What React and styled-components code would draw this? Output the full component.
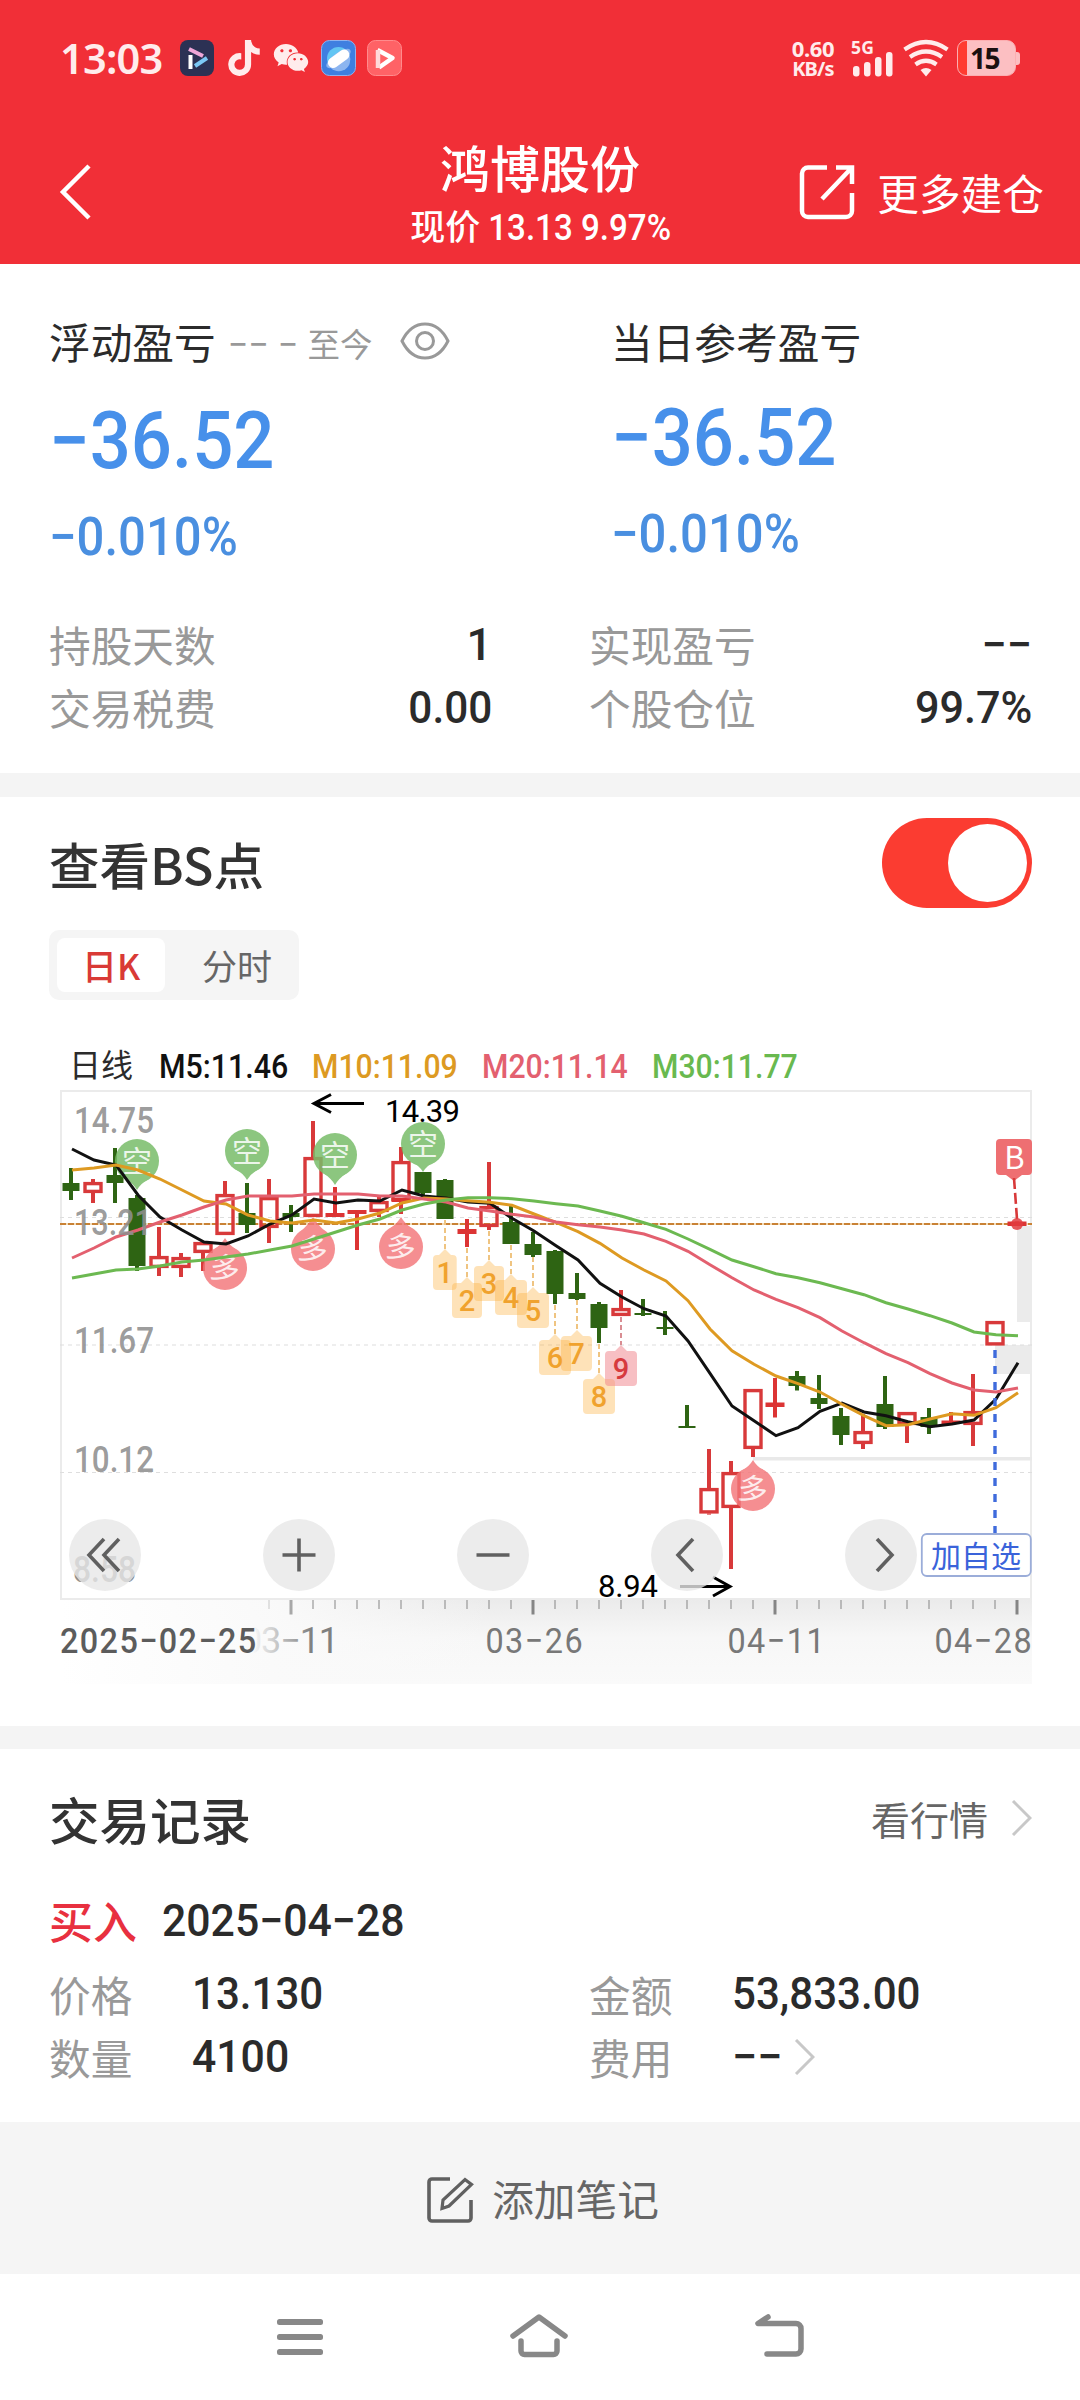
import React from "react";
import styled, { createGlobalStyle } from "styled-components";
import { FaTiktok, FaWeixin } from "react-icons/fa6";

const CJK = `"Noto Sans CJK SC", "Noto Sans", sans-serif`;
const DIN = `Roboto, "Noto Sans CJK SC", sans-serif`;

const GlobalStyle = createGlobalStyle`
  *, *::before, *::after { box-sizing: border-box; }
  body { margin: 0; background: #fff; font-family: ${CJK}; color: #2b2b2b; }
  svg { display: block; flex-shrink: 0; }
`;

const Page = styled.div`
  width: 1080px;
  height: 2400px;
  display: flex;
  flex-direction: column;
  background: #fff;
  overflow: hidden;
`;

const Num = styled.span`
  display: inline-block;
  font-family: ${DIN};
  font-weight: ${(p) => p.$weight || 500};
  font-size: ${(p) => p.$size || 45}px;
  color: ${(p) => p.$color || "inherit"};
  white-space: pre;
  transform: scaleX(${(p) => p.$sx || 1});
  transform-origin: ${(p) => p.$origin || "left"} center;
`;

/* ---------- header ---------- */
const Top = styled.header`
  height: 264px;
  background: #f12f37;
  color: #fff;
`;
const StatusBar = styled.div`
  height: 116px;
  padding: 0 60px;
  display: flex;
  align-items: center;
  justify-content: space-between;
`;
const StatusGroup = styled.div`
  display: flex;
  align-items: center;
  color: #ffecec;
`;
const Clock = styled.span`
  font: 600 41.5px/58px "Noto Sans", sans-serif;
  width: 120px;
  letter-spacing: -0.8px;
`;
const AppIcons = styled.div`
  display: flex;
  align-items: center;
  gap: 11.500px;
`;
const Speed = styled.div`
  font: 700 22px/22px "Noto Sans", sans-serif;
  text-align: center;
  width: 48px;
  letter-spacing: -0.3px;
`;
const SpeedUnit = styled.div`
  font-size: 20px;
  line-height: 20px;
  letter-spacing: -0.8px;
`;
const Signal = styled.div`
  display: flex;
  margin-left: 13px;
`;
const Battery = styled.div`
  width: 59px;
  height: 36px;
  margin-left: 9px;
  border-radius: 9px;
  background: linear-gradient(90deg, #ff3b30 9px, #fcbfc2 9px);
  border: 1px solid #fcaeb1;
  color: #1a1010;
  display: flex;
  align-items: center;
  justify-content: center;
  padding-right: 4px;
  font: 700 28px/34px "Noto Sans", sans-serif;
  letter-spacing: -1.5px;
`;
const BatteryCap = styled.i`
  width: 4px;
  height: 13px;
  border-radius: 0 3px 3px 0;
  background: #fcbfc2;
`;
const NavBar = styled.div`
  height: 148px;
  display: grid;
  grid-template-columns: 380px 320px 380px;
`;
const BackCell = styled.div`
  display: flex;
  align-items: center;
  padding: 4px 0 0 58px;
`;
const TitleCell = styled.div`
  padding-top: 20px;
  text-align: center;
  white-space: nowrap;
`;
const Title = styled.div`
  font-weight: 500;
  font-size: 50px;
  line-height: 60px;
`;
const SubTitle = styled.div`
  margin-top: 4px;
  display: flex;
  justify-content: center;
  align-items: baseline;
  padding-left: 18px;
  font-weight: 500;
  font-size: 35px;
  line-height: 50px;
`;
const ActionCell = styled.div`
  display: flex;
  align-items: center;
  justify-content: flex-end;
  gap: 22px;
  padding: 3px 36px 0 0;
  font-size: 41.7px;
`;

/* ---------- sections ---------- */
const Divider = styled.div`
  height: ${(p) => p.$h}px;
  background: #f4f4f4;
`;
const Summary = styled.section`
  height: 509px;
  padding: 46.500px 48px 0 49px;
`;
const ProfitRow = styled.div`
  display: grid;
  grid-template-columns: 562px 1fr;
  height: 256px;
`;
const ProfitLabel = styled.div`
  display: flex;
  align-items: center;
  height: 60px;
  font-size: 41.7px;
  line-height: 60px;
`;
const Since = styled.span`
  margin: 7px 0 0 12px;
  color: #999;
  font-size: 32.500px;
`;
const EyeWrap = styled.span`
  margin-left: 28px;
`;
const BigValue = styled.div`
  margin-top: ${(p) => p.$gap}px;
  height: 80px;
  line-height: 80px;
  color: #4790ea;
`;
const Percent = styled.div`
  margin-top: 26px;
  height: 60px;
  line-height: 60px;
  color: #4a8fe0;
`;
const Stats = styled.div`
  margin-top: 46px;
  display: grid;
  grid-template-columns: 443px 443px;
  justify-content: space-between;
`;
const Stat = styled.div`
  height: 63px;
  display: flex;
  align-items: center;
  justify-content: space-between;
`;
const Label = styled.span`
  color: #999;
  font-size: 41.7px;
  line-height: 60px;
  width: ${(p) => (p.$w ? p.$w + "px" : "auto")};
`;

const ChartSection = styled.section`
  height: 929px;
`;
const SectionHead = styled.div`
  height: ${(p) => p.$h}px;
  padding: 0 48px 2px 49px;
  display: flex;
  align-items: center;
  justify-content: space-between;
`;
const Heading = styled.h2`
  margin: 0;
  font-weight: 500;
  font-size: 50.500px;
  line-height: 70px;
  color: #333;
`;
const Toggle = styled.div`
  width: 150px;
  height: 90px;
  border-radius: 45px;
  background: #fb3c31;
  padding: 6px 5px;
  display: flex;
  justify-content: flex-end;
`;
const Knob = styled.div`
  width: 79px;
  height: 78px;
  border-radius: 50%;
  background: #fff;
`;
const Tabs = styled.div`
  width: 250px;
  height: 70px;
  margin-left: 49px;
  padding: 8px;
  border-radius: 10px;
  background: #f5f5f5;
  display: flex;
`;
const Tab = styled.div`
  flex: none;
  width: ${(p) => p.$w}px;
  height: 54px;
  padding-left: ${(p) => p.$pad || 0}px;
  border-radius: 8px;
  line-height: 54px;
  text-align: center;
  font-size: 35px;
  font-weight: ${(p) => (p.$on ? 500 : 400)};
  color: ${(p) => (p.$on ? "#d93a36" : "#666")};
  background: ${(p) => (p.$on ? "#fff" : "transparent")};
`;
const Averages = styled.div`
  height: 50px;
  margin-top: 40px;
  padding: 0 0 4px 69px;
  display: flex;
  align-items: center;
  font-size: 32px;
  line-height: 46px;
  white-space: nowrap;
`;
const Average = styled.div`
  width: ${(p) => p.$w}px;
  padding-top: ${(p) => p.$pt}px;
`;
const ChartWrap = styled.div`
  position: relative;
  height: 600px;
`;
const Controls = styled.div`
  position: absolute;
  left: 69px;
  top: 429px;
  display: flex;
  gap: 122px;
`;
const RoundButton = styled.button`
  width: 72px;
  height: 72px;
  padding: 0;
  border: 0;
  border-radius: 50%;
  background: rgba(231, 231, 231, 0.8);
  display: flex;
  align-items: center;
  justify-content: center;
`;

/* ---------- records ---------- */
const Records = styled.section`
  height: 373px;
`;
const More = styled.div`
  display: flex;
  align-items: center;
  gap: 23px;
  font-size: 39px;
  color: #666;
`;
const TradeHead = styled.div`
  height: 62px;
  padding-left: 49px;
  display: flex;
  align-items: center;
`;
const Side = styled.span`
  width: 113px;
  font-weight: 500;
  font-size: 44px;
  line-height: 62px;
  color: #e8303f;
`;
const TradeGrid = styled.div`
  margin: 11px 0 0 49px;
  display: grid;
  grid-template-columns: 540px 1fr;
`;
const Field = styled.div`
  height: 63px;
  display: flex;
  align-items: center;
`;
const AddNote = styled.div`
  height: 152px;
  background: #f5f5f5;
  display: flex;
  align-items: center;
  justify-content: center;
  gap: 18px;
  padding-left: 5px;
  font-size: 41.7px;
  color: #666;
`;
const NoteIcon = styled.span`
  padding-top: 4px;
`;
const SystemNav = styled.nav`
  height: 126px;
  padding: 0 276px 3px;
  display: flex;
  align-items: center;
  justify-content: space-between;
`;

/* ---------- chart data ---------- */
const X0 = 71;
const STEP = 22;
const R = "#d8393a";
const G = "#2e6413";
// [kind, high, low, bodyTop, bodyBottom]; r = hollow red, s = solid red, g = green
const candles = [
  ["g", 1168, 1200, 1183, 1191],
  ["r", 1179, 1203, 1182, 1193],
  ["g", 1148, 1203, 1175, 1183],
  ["g", 1195, 1271, 1198, 1266],
  ["r", 1227, 1276, 1256, 1268],
  ["r", 1253, 1277, 1257, 1268],
  ["r", 1242, 1271, 1242, 1253],
  ["r", 1181, 1235, 1194, 1235],
  ["g", 1183, 1233, 1213, 1225],
  ["r", 1179, 1243, 1197, 1228],
  ["g", 1205, 1232, 1213, 1217],
  ["r", 1121, 1217, 1157, 1217],
  ["s", 1187, 1217, 1213, 1217],
  ["s", 1210, 1250, 1210, 1214],
  ["r", 1197, 1217, 1201, 1212],
  ["r", 1147, 1214, 1161, 1201],
  ["g", 1172, 1195, 1172, 1193],
  ["g", 1179, 1219, 1180, 1219],
  ["s", 1219, 1247, 1229, 1234],
  ["r", 1162, 1230, 1206, 1227],
  ["g", 1206, 1244, 1222, 1244],
  ["g", 1232, 1257, 1244, 1255],
  ["g", 1250, 1304, 1251, 1294],
  ["g", 1273, 1300, 1293, 1299],
  ["g", 1302, 1343, 1304, 1328],
  ["r", 1290, 1316, 1308, 1316],
  ["g", 1299, 1316, 1313, 1315],
  ["g", 1311, 1335, 1327, 1329],
  ["g", 1405, 1428, 1426, 1428],
  ["r", 1449, 1514.6, 1488, 1513.5],
  ["r", 1461, 1569, 1472, 1508],
  ["r", 1389, 1457, 1389, 1449],
  ["s", 1378, 1417.5, 1402.5, 1407],
  ["g", 1371, 1390.5, 1376, 1386],
  ["g", 1375, 1409, 1398, 1404],
  ["g", 1408, 1445, 1416, 1435],
  ["r", 1414, 1449, 1431, 1444],
  ["g", 1376, 1429, 1404, 1427],
  ["r", 1412, 1443, 1412, 1425],
  ["g", 1408, 1434, 1417, 1427],
  ["s", 1412, 1424, 1420.5, 1424],
  ["r", 1374, 1446, 1411, 1425],
  ["r", 1321, 1345.5, 1321, 1345.5],
  ["s", 1221.5, 1226, 1221.5, 1226],
];
const averages = [
  ["#111", [207,240,255,345,411,450,486,492,468,432,405,357,369,360,363,330,348,354,366,370,415,453,497,540,610,651,686,708,783,880,978,1022,1067,1043,994,969,996,1007,1025,1040,1032,1020,957,848]],
  ["#de9a22", [270,264,255,270,297,330,363,372,405,423,429,420,429,417,399,369,354,357,362,367,376,402,427,455,490,534,570,603,662,747,812,853,888,911,936,973,1007,1037,1034,1017,1001,1006,983,938]],
  ["#e3606f", [534,504,471,450,426,405,381,360,348,348,348,342,342,342,348,348,357,366,384,393,403,411,426,434,441,450,462,484,514,554,593,630,658,683,713,753,788,821,848,881,909,930,936,924]],
  ["#6cb951", [594,582,570,567,558,546,540,531,522,510,498,477,456,435,417,390,372,360,353,353,356,363,371,378,393,409,428,448,477,508,540,560,581,593,608,626,644,668,687,707,729,756,764,767]],
];
// [centre x, centre y, tip y]
const shortPins = [[137, 1161, 1190], [247, 1151, 1180], [335, 1155, 1185], [423, 1144, 1172]];
const longPins = [[225, 1268, 1238], [313, 1249, 1217], [401, 1247, 1217], [753, 1489, 1460]];
// [digit, left, right, rect top, stem start, stem x]
const tags = [
  [1, 433, 456.7, 1255, 1220, 445],
  [2, 452, 482, 1283, 1248, 467],
  [3, 474, 504, 1266, 1231, 489],
  [4, 495, 527, 1280, 1245, 511],
  [5, 517, 549, 1293, 1257, 533],
  [6, 539, 571, 1340, 1305, 555],
  [7, 561, 592, 1336, 1300, 577],
  [8, 583, 615, 1379, 1344, 599],
  [9, 605, 637, 1351, 1317, 621],
];
const prices = [["14.75", 1133, 80], ["13.21", 1235, 78], ["11.67", 1353, 80], ["10.12", 1472, 80]];

const Candle = ({ data: [kind, hi, lo, top, bottom], i }) => {
  const x = X0 + STEP * i;
  if (kind === "g")
    return (
      <g fill={G}>
        <rect x={x - 2} y={hi} width="4" height={lo - hi} />
        <rect x={x - 8.5} y={top} width="17" height={bottom - top} />
      </g>
    );
  if (kind === "s")
    return (
      <g fill="#dc3434">
        <rect x={x - 2} y={hi} width="4" height={lo - hi} />
        <rect x={x - 9.5} y={top} width="19" height={bottom - top} />
      </g>
    );
  return (
    <g fill={R}>
      <rect x={x - 2} y={hi} width="4" height={Math.max(0, top - hi)} />
      <rect x={x - 2} y={bottom} width="4" height={Math.max(0, lo - bottom)} />
      <rect x={x - 8} y={top + 1.6} width="16" height={bottom - top - 3.2} fill="none" stroke={R} strokeWidth="3.4" />
    </g>
  );
};

const ticks = Array.from({ length: 35 }, (_, k) => 269 + STEP * k);

const KLine = () => (
  <svg width="1080" height="600" viewBox="0 1090 1080 600" fontFamily={DIN}>
    <defs>
      <linearGradient id="rulerDown" x1="0" y1="0" x2="0" y2="1">
        <stop offset="0" stopColor="#ebebeb" />
        <stop offset="0.45" stopColor="#f7f7f7" />
        <stop offset="1" stopColor="#fafafa" />
      </linearGradient>
      <linearGradient id="rulerFade" x1="0" y1="0" x2="1" y2="0">
        <stop offset="0" stopColor="#fff" />
        <stop offset="0.5" stopColor="#fafafa" stopOpacity="0.95" />
        <stop offset="1" stopColor="#fafafa" stopOpacity="0" />
      </linearGradient>
      <linearGradient id="dateFade" gradientUnits="userSpaceOnUse" x1="252" y1="0" x2="312" y2="0">
        <stop offset="0" stopColor="#808080" stopOpacity="0" />
        <stop offset="1" stopColor="#808080" />
      </linearGradient>
    </defs>

    <rect x="60" y="1600" width="972" height="84" fill="url(#rulerDown)" />
    <rect x="60" y="1600" width="430" height="84" fill="url(#rulerFade)" />

    <rect x="61" y="1091" width="970" height="508" fill="none" stroke="#ebebeb" strokeWidth="2" />
    <rect x="1017" y="1226" width="15" height="96" fill="#ebebeb" />
    <rect x="995" y="1345" width="37" height="29" fill="#ebebeb" />
    <rect x="753" y="1457" width="279" height="3.5" fill="#e9e9e9" />
    {[1217.5, 1345, 1472.5].map((y) => (
      <line key={y} x1="60" x2="1032" y1={y} y2={y} stroke="#dedede" strokeWidth="1.2" strokeDasharray="4 4" />
    ))}
    <line x1="60" x2="1032" y1="1224" y2="1224" stroke="#f3dcb8" strokeWidth="2" />
    <line x1="60" x2="1032" y1="1224" y2="1224" stroke="#c98235" strokeWidth="2" strokeDasharray="6 2" />

    {candles.map((c, i) => (
      <Candle key={i} data={c} i={i} />
    ))}
    <rect x="391.500" y="1198" width="19" height="4" fill="#dc3434" />

    {shortPins.map(([x, y, tip]) => (
      <g key={x} opacity="0.85">
        <circle cx={x} cy={y} r="22" fill="#78bd69" />
        <path d={`M${x - 12} ${y + 18}Q${x - 4} ${tip - 7} ${x} ${tip}Q${x + 4} ${tip - 7} ${x + 12} ${y + 18}Z`} fill="#78bd69" />
        <text x={x} y={y + 10.5} fontSize="30" fill="#fff" fillOpacity="0.85" textAnchor="middle" fontFamily={CJK}>空</text>
      </g>
    ))}
    {longPins.map(([x, y, tip]) => (
      <g key={x} opacity="0.82">
        <circle cx={x} cy={y} r="22" fill="#f37679" />
        <path d={`M${x - 12} ${y - 18}Q${x - 4} ${tip + 7} ${x} ${tip}Q${x + 4} ${tip + 7} ${x + 12} ${y - 18}Z`} fill="#f37679" />
        <text x={x} y={y + 11} fontSize="30" fill="#fff" fillOpacity="0.85" textAnchor="middle" fontFamily={CJK} transform={`rotate(8 ${x} ${y})`}>多</text>
      </g>
    ))}

    {averages.map(([color, pts]) => (
      <polyline
        key={color}
        fill="none"
        stroke={color}
        strokeWidth="3"
        points={pts.map((v, i) => `${72 + STEP * i},${(1080 + v / 3).toFixed(1)}`).join(" ")}
      />
    ))}

    {tags.map(([n, l, r, top, from, sx]) => {
      const red = n === 9;
      return (
        <g key={n}>
          <line x1={sx} x2={sx} y1={from} y2={top - 6} stroke={red ? "#d98d92" : "#efc481"} strokeWidth="2" strokeDasharray="5 3" />
          <path
            d={`M${l + 4} ${top}H${sx - 6}L${sx} ${top - 6}L${sx + 6} ${top}H${r - 4}a4 4 0 0 1 4 4V${top + 31}a4 4 0 0 1 -4 4H${l + 4}a4 4 0 0 1 -4 -4V${top + 4}a4 4 0 0 1 4 -4Z`}
            fill={red ? "#ef8088" : "#fbb03b"}
            fillOpacity={red ? 0.5 : 0.36}
          />
          <text x={(l + r) / 2} y={top + 28} fontSize="29" fontWeight="500" textAnchor="middle" fill={red ? "#d63a3e" : "#f0a22e"}>
            {n}
          </text>
        </g>
      );
    })}

    <path d="M364 1103.5H314M331 1094.5L314 1103.5L331 1112.5" fill="none" stroke="#000" strokeWidth="3" />
    <text x="385" y="1122" fontSize="31" fill="#000" textLength="75">14.39</text>
    <path d="M680 1586.5H730M713 1577L730 1586.5L713 1596" fill="none" stroke="#000" strokeWidth="3" />
    <text x="598" y="1597" fontSize="31" fill="#000" textLength="60">8.94</text>

    <g opacity="0.95">
      <path d="M1000 1139h28a4 4 0 0 1 4 4v28a4 4 0 0 1 -4 4h-6l-8 6l-8 -6h-6a4 4 0 0 1 -4 -4v-28a4 4 0 0 1 4 -4Z" fill="#ee686b" />
      <text x="1014.5" y="1168.5" fontSize="31" fill="#fff" textAnchor="middle" fontFamily={CJK}>B</text>
    </g>
    <line x1="1014" y1="1178" x2="1017" y2="1219" stroke="#d8393a" strokeWidth="2.6" strokeDasharray="11 4" />
    <circle cx="1017" cy="1224" r="6" fill="#e23c40" opacity="0.85" />

    <line x1="995" x2="995" y1="1350" y2="1534" stroke="#3f6bdc" strokeWidth="3.4" strokeDasharray="8 8" />
    <rect x="921.8" y="1534" width="109" height="42" rx="5" fill="#fff" stroke="#9badd9" strokeWidth="1.8" />
    <text x="976" y="1567" fontSize="30" fill="#3a63da" textAnchor="middle" fontFamily={CJK}>加自选</text>

    {prices.map(([t, y, w]) => (
      <text key={t} x="74" y={y} fontSize="36" fontWeight="500" fill="#8f8f8f" fillOpacity="0.9" textLength={w} lengthAdjust="spacingAndGlyphs">
        {t}
      </text>
    ))}
    <text x="73" y="1582" fontSize="36" fontWeight="500" fill="#8f8f8f" textLength="63" lengthAdjust="spacingAndGlyphs">8.58</text>

    {ticks.map((x) => {
      const major = (x - 291) % 242 === 0;
      return (
        <rect
          key={x}
          x={x - (major ? 1.5 : 0.5)}
          y="1600"
          width={major ? 3 : 1}
          height={major ? 14.5 : 9}
          fill={x < 280 ? "#c8c8c8" : x < 300 ? "#a8a8a8" : "#858585"}
        />
      );
    })}
    <g fontSize="36" fill="#787878">
      <g transform="translate(60 1653) scale(0.9 1)">
        <text fill="#5c5c5c" fontWeight="500" textLength="218">2025−02−25</text>
      </g>
      <g transform="translate(534 1653) scale(0.9 1)">
        <text x="-54" textLength="108">03−26</text>
      </g>
      <g transform="translate(776 1653) scale(0.9 1)">
        <text x="-54" textLength="108">04−11</text>
      </g>
      <g transform="translate(983 1653) scale(0.9 1)">
        <text x="-54" textLength="108">04−28</text>
      </g>
      <text x="242" y="1653" fill="url(#dateFade)" textLength="97">03−11</text>
    </g>
  </svg>
);

const controlPaths = [
  "M35 20L20 36L35 52M50 20L35 36L50 52",
  "M19.5 36H52.5M36 19.5V52.5",
  "M19.5 36H52.5",
  "M42 20L27 36L42 52",
  "M32 20L47 36L32 52",
];

const Chevron = () => (
  <svg width="21" height="36" viewBox="0 0 21 36" fill="none" stroke="#c8c8c8" strokeWidth="3">
    <path d="M2 1L19 18L2 35" />
  </svg>
);

const Profit = ({ children, gap }) => (
  <div>
    <ProfitLabel>{children}</ProfitLabel>
    <BigValue $gap={gap}><Num $size={80} $sx={0.905}>−36.52</Num></BigValue>
    <Percent><Num $size={53} $sx={0.925}>−0.010%</Num></Percent>
  </div>
);

export default function App() {
  return (
    <Page>
      <GlobalStyle />
      <Top>
        <StatusBar>
          <StatusGroup>
            <Clock>13:03</Clock>
            <AppIcons>
              <svg width="34" height="36" viewBox="0 0 34 36">
                <rect width="34" height="36" rx="8" fill="#2c3154" />
                <path d="M10.5 15V29" stroke="#fff" strokeWidth="4" />
                <path d="M9 9L23 16" stroke="#efa6d8" strokeWidth="4" />
                <path d="M15 26L27 18" stroke="#7cc8f5" strokeWidth="4" />
              </svg>
              <FaTiktok size={36} />
              <FaWeixin size={36} />
              <svg width="35" height="36" viewBox="0 0 35 36">
                <rect x="0.5" y="0.5" width="34" height="35" rx="8" fill="#3f7fe0" stroke="#8fb2ee" />
                <circle cx="17.5" cy="18.5" r="11.5" fill="#63c6f3" />
                <path d="M7 24A11.5 11.5 0 0 0 28.500 15Z" fill="#8cb5f0" />
                <ellipse cx="17.500" cy="18.500" rx="14.500" ry="5.500" fill="#8cb5f0" transform="rotate(-36 17.5 18.5)" />
                <rect x="5.500" y="13.500" width="24" height="10.500" rx="5.200" fill="#fff" transform="rotate(-36 17.5 18.5)" />
              </svg>
              <svg width="35" height="36" viewBox="0 0 35 36">
                <rect x="0.5" y="0.5" width="34" height="35" rx="8" fill="#ff6266" stroke="#ff8b8d" />
                <path d="M10.5 10L25.500 18L12 27.500" fill="none" stroke="#fff" strokeWidth="4.500" strokeLinejoin="round" />
                <path d="M11 10V28" stroke="#ffd9da" strokeWidth="4.500" />
              </svg>
            </AppIcons>
          </StatusGroup>
          <StatusGroup>
            <Speed>
              0.60
              <SpeedUnit>KB/s</SpeedUnit>
            </Speed>
            <Signal>
              <svg width="98" height="40" viewBox="850 38 98 40" fill="#ffecec" overflow="visible">
                <text x="851" y="53.500" fontSize="17.500" fontWeight="700" fontFamily="Noto Sans" textLength="23">5G</text>
                <rect x="853" y="66" width="6.500" height="10.500" rx="3" />
                <rect x="864" y="62" width="6.500" height="14.500" rx="3" />
                <rect x="875" y="57" width="6.500" height="19.500" rx="3" />
                <rect x="886" y="52" width="6.500" height="24.500" rx="3" />
                <g fill="none" stroke="#ffecec" strokeWidth="4.200">
                  <path d="M904.500 49.500Q926 34.500 947.500 49.500" />
                  <path d="M910 57Q926 46 942 57" />
                  <path d="M915.500 64.500Q926 57 936.500 64.500" />
                </g>
                <path d="M920.500 70Q926 66 931.500 70L926 76.500Z" />
              </svg>
            </Signal>
            <Battery>15</Battery>
            <BatteryCap />
          </StatusGroup>
        </StatusBar>
        <NavBar>
          <BackCell>
            <svg width="34" height="56" viewBox="0 0 34 56" fill="none" stroke="#fff" strokeWidth="4.500">
              <path d="M31 2L5 28L31 54" />
            </svg>
          </BackCell>
          <TitleCell>
            <Title>鸿博股份</Title>
            <SubTitle>现价<Num $size={36} $sx={0.92}> 13.13 9.97%</Num></SubTitle>
          </TitleCell>
          <ActionCell>
            <svg width="56" height="56" viewBox="0 0 56 56" fill="none" stroke="#fff" strokeWidth="4.500">
              <path d="M28 3.500H9a6 6 0 0 0 -6 6V47a6 6 0 0 0 6 6H47a6 6 0 0 0 6 -6V29" />
              <path d="M37 3.500H53V20M53 3.500L23 35" />
            </svg>
            更多建仓
          </ActionCell>
        </NavBar>
      </Top>

      <Summary>
        <ProfitRow>
          <Profit gap={30}>
            浮动盈亏
            <Since><Num $size={36} $weight={400}>−− − </Num>至今</Since>
            <EyeWrap>
              <svg width="50" height="38" viewBox="0 0 50 38" fill="none" stroke="#999" strokeWidth="3">
                <path d="M2 19C8 7 16 2 25 2S42 7 48 19C42 31 34 36 25 36S8 31 2 19Z" />
                <circle cx="25" cy="19" r="8.500" />
              </svg>
            </EyeWrap>
          </Profit>
          <Profit gap={27}>当日参考盈亏</Profit>
        </ProfitRow>
        <Stats>
          <Stat><Label>持股天数</Label><Num>1</Num></Stat>
          <Stat><Label>实现盈亏</Label><Num>−−</Num></Stat>
          <Stat><Label>交易税费</Label><Num $sx={0.94} $origin="right">0.00</Num></Stat>
          <Stat><Label>个股仓位</Label><Num $sx={0.96} $origin="right">99.7%</Num></Stat>
        </Stats>
      </Summary>
      <Divider $h={24} />

      <ChartSection>
        <SectionHead $h={133}>
          <Heading>查看BS点</Heading>
          <Toggle><Knob /></Toggle>
        </SectionHead>
        <Tabs>
          <Tab $on $w={108}>日K</Tab>
          <Tab $w={126} $pad={18}>分时</Tab>
        </Tabs>
        <Averages>
          <Average $w={90} $pt={0}>日线</Average>
          <Average $w={153} $pt={4}><Num $size={33} $sx={0.92} $color="#111">M5:11.46</Num></Average>
          <Average $w={170} $pt={4}><Num $size={33} $sx={0.915} $color="#dd9a22">M10:11.09</Num></Average>
          <Average $w={170} $pt={4}><Num $size={33} $sx={0.915} $color="#e3606f">M20:11.14</Num></Average>
          <Average $w={170} $pt={4}><Num $size={33} $sx={0.915} $color="#69b94f">M30:11.77</Num></Average>
        </Averages>
        <ChartWrap>
          <KLine />
          <Controls>
            {controlPaths.map((d) => (
              <RoundButton key={d}>
                <svg width="72" height="72" fill="none" stroke="#606060" strokeWidth="3.600"><path d={d} /></svg>
              </RoundButton>
            ))}
          </Controls>
        </ChartWrap>
      </ChartSection>
      <Divider $h={23} />

      <Records>
        <SectionHead $h={140}>
          <Heading>交易记录</Heading>
          <More>看行情<Chevron /></More>
        </SectionHead>
        <TradeHead>
          <Side>买入</Side>
          <Num $sx={0.95}>2025−04−28</Num>
        </TradeHead>
        <TradeGrid>
          <Field><Label $w={143}>价格</Label><Num $sx={0.935}>13.130</Num></Field>
          <Field><Label $w={143}>金额</Label><Num $sx={0.935}>53,833.00</Num></Field>
          <Field><Label $w={143}>数量</Label><Num $sx={0.95}>4100</Num></Field>
          <Field><Label $w={143}>费用</Label><Num>−− </Num><Chevron /></Field>
        </TradeGrid>
      </Records>

      <AddNote>
        <NoteIcon>
          <svg width="48" height="48" viewBox="0 0 48 48" fill="none" stroke="#606060" strokeWidth="3.600">
            <path d="M24 3H6a3 3 0 0 0 -3 3V42a3 3 0 0 0 3 3H42a3 3 0 0 0 3 -3V24" />
            <path d="M16 32.500L17 24L39 3.500L45.500 8.500L23 30Z" strokeWidth="3.200" />
          </svg>
        </NoteIcon>
        添加笔记
      </AddNote>

      <SystemNav>
        <svg width="48" height="44" viewBox="0 0 48 44" fill="#888">
          <rect x="1" y="5" width="46" height="6" rx="2.500" />
          <rect x="1" y="20" width="46" height="6" rx="2.500" />
          <rect x="1" y="35" width="46" height="6" rx="2.500" />
        </svg>
        <svg width="60" height="46" viewBox="0 0 60 46" fill="none" stroke="#888" strokeWidth="5.500" strokeLinecap="round" strokeLinejoin="round">
          <path d="M4 23L30 4L56 23" />
          <path d="M12 28V38a3.500 3.500 0 0 0 3.500 3.500H44.500A3.500 3.500 0 0 0 48 38V28" />
        </svg>
        <svg width="50" height="46" viewBox="0 0 50 46" fill="none" stroke="#888" strokeWidth="5.500" strokeLinecap="round" strokeLinejoin="round">
          <path d="M14 4L4 10.500H42a5 5 0 0 1 5 5V36a5 5 0 0 1 -5 5H13" />
        </svg>
      </SystemNav>
    </Page>
  );
}
